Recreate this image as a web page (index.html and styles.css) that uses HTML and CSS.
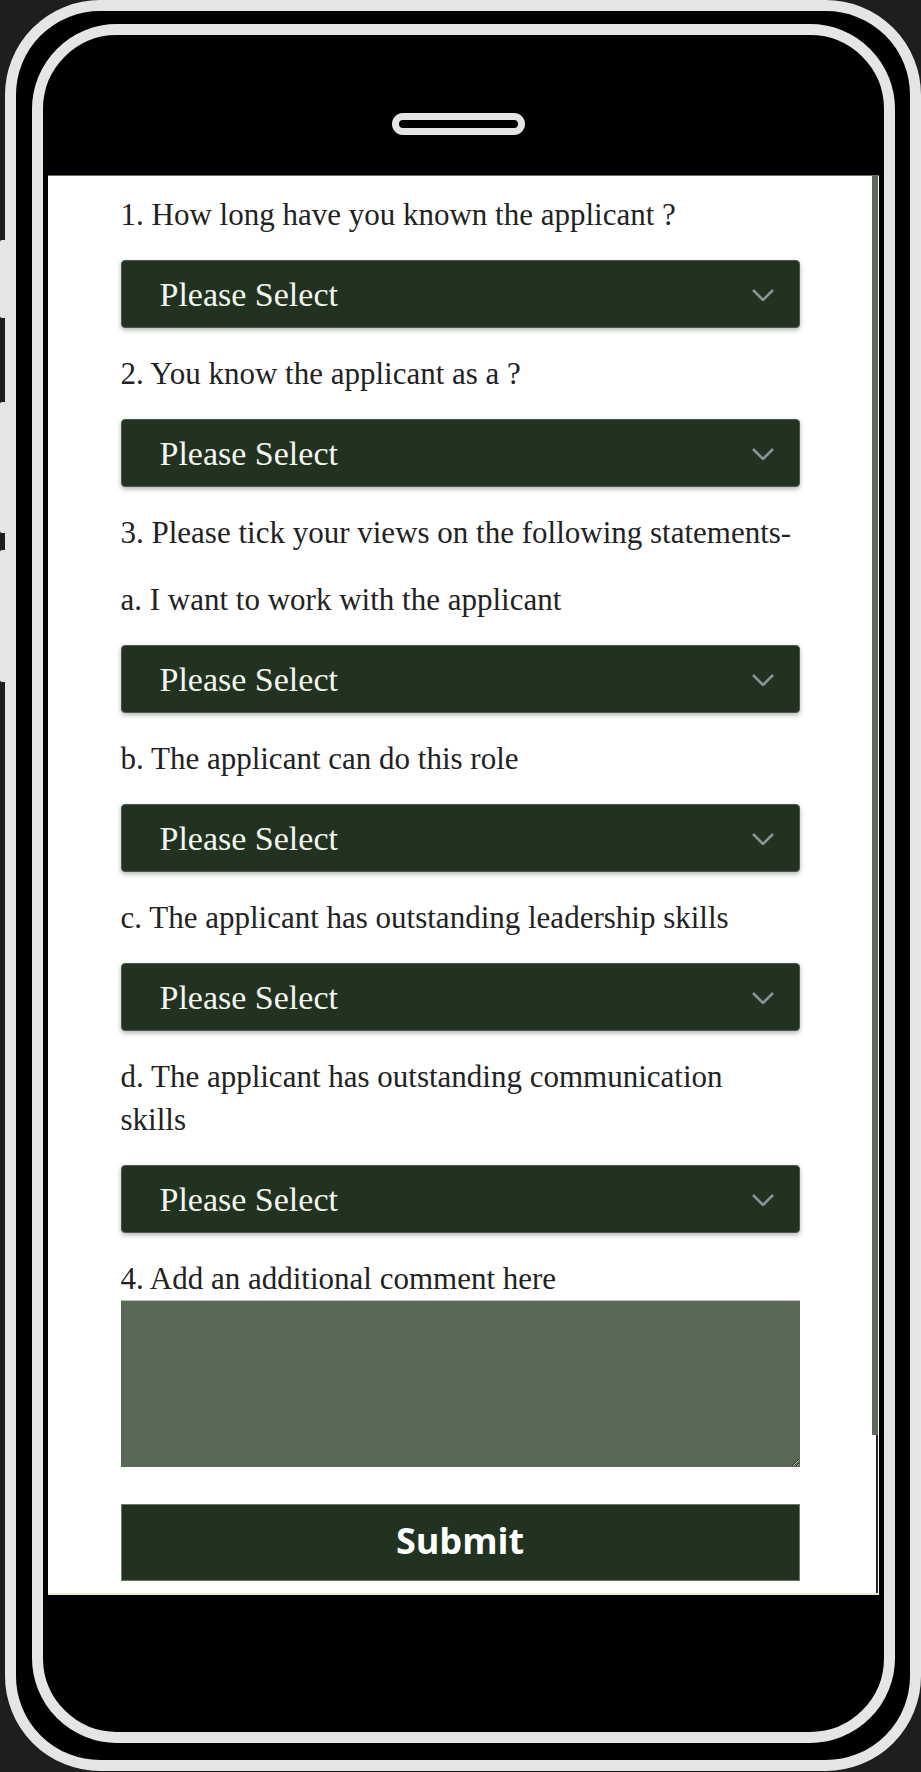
FILE: index.html
```html
<!DOCTYPE html>
<html lang="en">
<head>
  <meta charset="UTF-8">
  <title>Reference Form</title>
  <link rel="stylesheet" href="styles.css">
</head>
<body>
  <div class="device">
    <div class="side-keys">
      <span class="key key-mute"></span>
      <span class="key key-up"></span>
      <span class="key key-down"></span>
    </div>

    <div class="phone">
      <div class="frame">
        <div class="speaker"></div>

        <div class="screen">
          <form class="page" onsubmit="return false">
            <div class="form-body">
              <label class="question">1. How long have you known the applicant ?</label>
              <div class="select-wrap">
                <select class="dropdown">
                  <option>Please Select</option>
                  <option>Less than a year</option>
                  <option>1 - 3 years</option>
                  <option>More than 3 years</option>
                </select>
                <svg class="chevron" viewBox="0 0 22 12"><path d="M1 1 L11 11 L21 1"/></svg>
              </div>

              <label class="question">2. You know the applicant as a ?</label>
              <div class="select-wrap">
                <select class="dropdown">
                  <option>Please Select</option>
                  <option>Colleague</option>
                  <option>Manager</option>
                  <option>Friend</option>
                </select>
                <svg class="chevron" viewBox="0 0 22 12"><path d="M1 1 L11 11 L21 1"/></svg>
              </div>

              <label class="question">3. Please tick your views on the following statements-</label>

              <label class="question">a. I want to work with the applicant</label>
              <div class="select-wrap">
                <select class="dropdown">
                  <option>Please Select</option>
                  <option>Agree</option>
                  <option>Neutral</option>
                  <option>Disagree</option>
                </select>
                <svg class="chevron" viewBox="0 0 22 12"><path d="M1 1 L11 11 L21 1"/></svg>
              </div>

              <label class="question">b. The applicant can do this role</label>
              <div class="select-wrap">
                <select class="dropdown">
                  <option>Please Select</option>
                  <option>Agree</option>
                  <option>Neutral</option>
                  <option>Disagree</option>
                </select>
                <svg class="chevron" viewBox="0 0 22 12"><path d="M1 1 L11 11 L21 1"/></svg>
              </div>

              <label class="question">c. The applicant has outstanding leadership skills</label>
              <div class="select-wrap">
                <select class="dropdown">
                  <option>Please Select</option>
                  <option>Agree</option>
                  <option>Neutral</option>
                  <option>Disagree</option>
                </select>
                <svg class="chevron" viewBox="0 0 22 12"><path d="M1 1 L11 11 L21 1"/></svg>
              </div>

              <label class="question">d. The applicant has outstanding communication<br>skills</label>
              <div class="select-wrap">
                <select class="dropdown">
                  <option>Please Select</option>
                  <option>Agree</option>
                  <option>Neutral</option>
                  <option>Disagree</option>
                </select>
                <svg class="chevron" viewBox="0 0 22 12"><path d="M1 1 L11 11 L21 1"/></svg>
              </div>

              <label class="question question-tight">4. Add an additional comment here</label>
              <textarea class="comment"></textarea>

              <button type="submit" class="submit-button">Submit</button>
            </div>
          </form>

          <div class="scrollbar">
            <div class="scroll-thumb"></div>
            <div class="scroll-rest"></div>
          </div>
        </div>
      </div>
    </div>
  </div>
</body>
</html>
```

FILE: styles.css
```css
body {
  margin: 0;
  background-color: #1e1e1e;
  font-family: "Liberation Serif", serif;
}

.device {
  display: flex;
  height: 1772px;
}

/* side buttons */
.side-keys {
  width: 5px;
  padding-top: 240px;
  display: flex;
  flex-direction: column;
}

.key {
  display: block;
  background-color: #e5e5e5;
  border-radius: 2px 0 0 2px;
}

.key-mute {
  height: 78px;
}

.key-up {
  height: 131px;
  margin-top: 84px;
}

.key-down {
  height: 132px;
  margin-top: 17px;
}

/* phone body */
.phone {
  box-sizing: border-box;
  width: 916px;
  height: 1771px;
  border: 11px solid #e5e5e5;
  border-radius: 95px;
  padding: 13px 15px 17px 16px;
  background-color: #000;
}

.frame {
  box-sizing: border-box;
  height: 100%;
  border: 11px solid #e5e5e5;
  border-radius: 85px;
  background-color: #000;
  overflow: hidden;
}

.speaker {
  box-sizing: border-box;
  width: 133px;
  height: 22px;
  border: 7px solid #e5e5e5;
  border-radius: 11px;
  margin: 78px 0 0 349px;
}

.screen {
  box-sizing: border-box;
  display: flex;
  width: 831px;
  height: 1420px;
  margin: 40px 0 0 5px;
  background-color: #fff;
  border-top: 1px solid #66725f;
  border-bottom: 2px solid #e8efc6;
  overflow: hidden;
}

.page {
  width: 824px;
  margin: 0;
  padding-top: 17px;
}

.form-body {
  width: 679px;
  margin: 0 auto;
}

.question {
  display: block;
  font-size: 31px;
  line-height: 43px;
  color: #222;
  margin-bottom: 24px;
}

.question-tight {
  margin-bottom: 0;
}

.select-wrap {
  position: relative;
  margin-bottom: 24px;
}

.dropdown {
  display: block;
  width: 100%;
  height: 68px;
  appearance: none;
  -webkit-appearance: none;
  background-color: #213320;
  color: #f6f6f1;
  border: 1px solid #4e5752;
  border-radius: 4px;
  box-shadow: 0 2px 5px rgba(0, 0, 0, 0.3);
  padding: 0 0 0 38px;
  font-family: "Liberation Serif", serif;
  font-size: 34px;
  outline: none;
}

.chevron {
  position: absolute;
  right: 26px;
  top: 29px;
  width: 22px;
  height: 12px;
  fill: none;
  stroke: #8e939b;
  stroke-width: 2.5;
  pointer-events: none;
}

.comment {
  display: block;
  box-sizing: border-box;
  width: 100%;
  height: 167px;
  margin: 0;
  background-color: #586a56;
  border: none;
  border-top: 1px solid #b8c1b6;
  outline: none;
}

.submit-button {
  display: block;
  width: 100%;
  height: 77px;
  margin-top: 37px;
  background-color: #213320;
  border: 1px solid #6c7a69;
  color: #fff;
  font-family: "Open Sans", sans-serif;
  font-weight: 700;
  font-size: 36px;
  padding: 0 0 4px;
  cursor: pointer;
}

/* fake scrollbar on the right of the screen */
.scrollbar {
  width: 6px;
  display: flex;
  flex-direction: column;
}

.scroll-thumb {
  height: 1259px;
  background-color: #5a6c57;
}

.scroll-rest {
  flex: 1;
  border-right: 2px solid #222;
}
```
